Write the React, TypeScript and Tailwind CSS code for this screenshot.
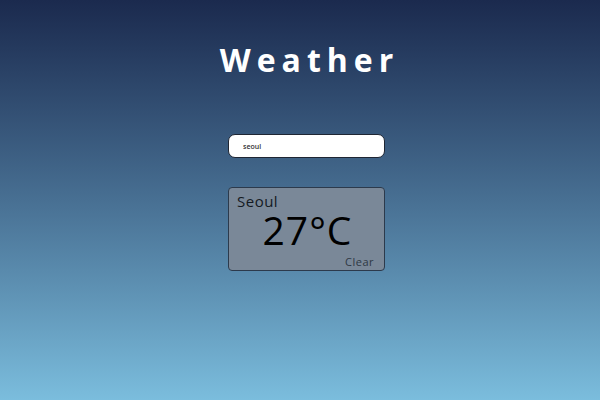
import React, { useState } from "react";

const App: React.FC = () => {
  const [city, setCity] = useState("seoul"); // search box value

  return (
    <div className="flex min-h-[400px] w-full flex-col items-center bg-gradient-to-b from-[#1b2a4e] to-[#7bbddd] pl-[13px] font-['Open_Sans',sans-serif]">
      <h1 className="mt-[40px] pl-[6px] text-[32px] font-bold leading-[40px] tracking-[6px] text-white">Weather</h1>

      {/* search input */}
      <input
        value={city}
        onChange={(e) => setCity(e.target.value)}
        className="mt-[54px] h-[24px] w-[157px] rounded-[7px] border-[1.5px] border-[#1f2633] bg-white px-[14px] text-[7px] font-semibold text-[#333] outline-none"
      />

      {/* result card */}
      <div className="mt-[29px] flex h-[84px] w-[157px] flex-col rounded-[4px] border border-[#2c3a4c] bg-[#7a8898] px-[8px] pt-[4px] pb-[2px]">
        <span className="text-[15px] leading-[18px] tracking-[0.5px] text-[#141a22]">Seoul</span>
        <span className="pl-[2px] text-center text-[39px] leading-[40px] tracking-[1px] text-black">27°C</span>
        <span className="mt-auto self-end pr-[2px] text-[11px] leading-[13px] tracking-[0.5px] text-[#2e3844]">Clear</span>
      </div>
    </div>
  );
};

export default App;
